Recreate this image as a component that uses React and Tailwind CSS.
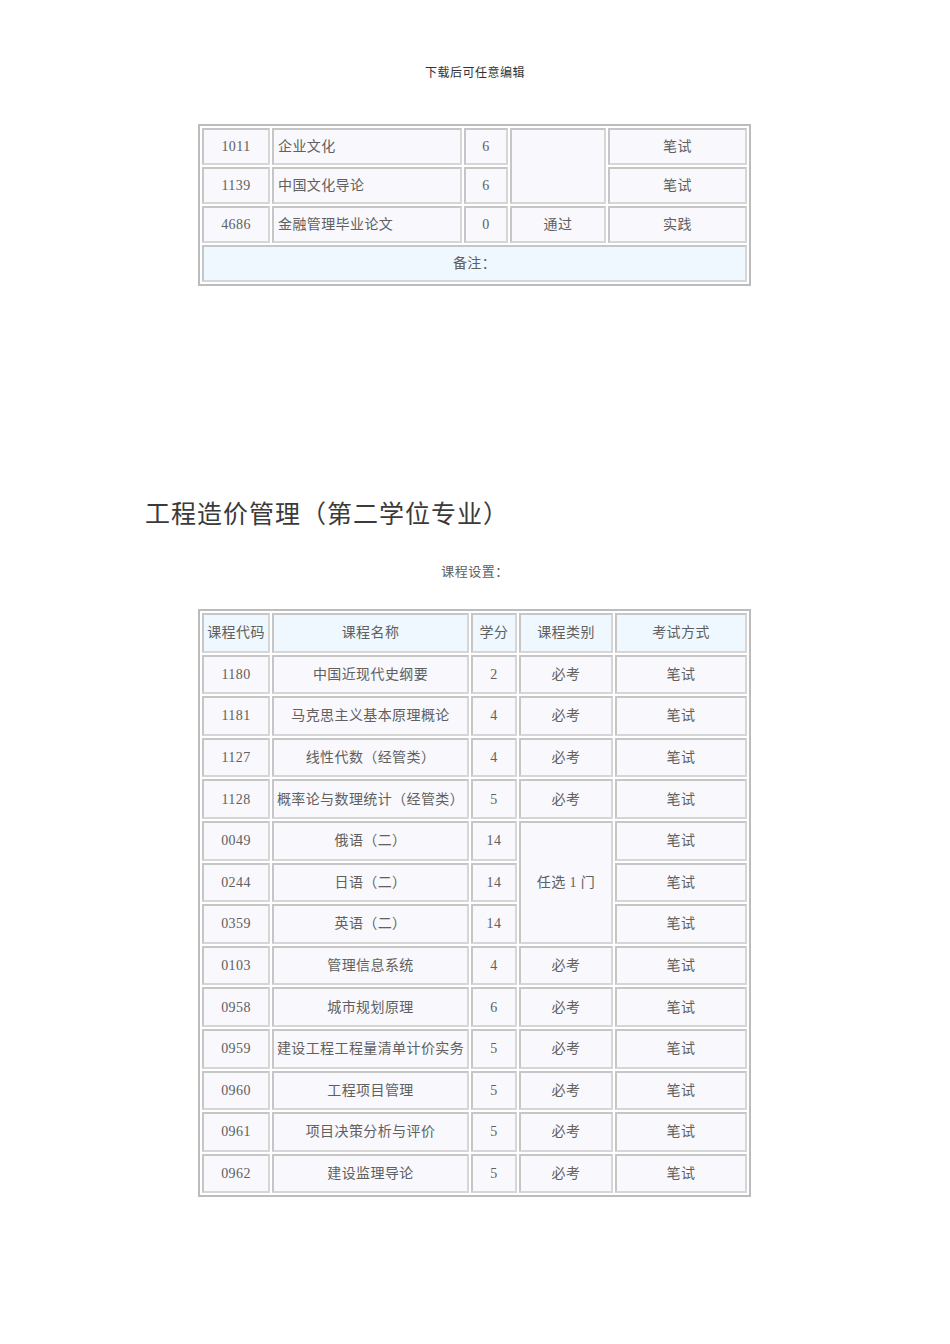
import React from 'react';

const font = { fontFamily: '"Liberation Serif", "Noto Sans CJK SC", serif' };

const first = [
  { code: '1011', name: '企业文化', credit: '6', exam: '笔试' },
  { code: '1139', name: '中国文化导论', credit: '6', exam: '笔试' },
  { code: '4686', name: '金融管理毕业论文', credit: '0', type: '通过', exam: '实践' },
];

const second = [
  ['1180', '中国近现代史纲要', '2', '必考'],
  ['1181', '马克思主义基本原理概论', '4', '必考'],
  ['1127', '线性代数（经管类）', '4', '必考'],
  ['1128', '概率论与数理统计（经管类）', '5', '必考'],
  ['0049', '俄语（二）', '14', 'span'],
  ['0244', '日语（二）', '14', null],
  ['0359', '英语（二）', '14', null],
  ['0103', '管理信息系统', '4', '必考'],
  ['0958', '城市规划原理', '6', '必考'],
  ['0959', '建设工程工程量清单计价实务', '5', '必考'],
  ['0960', '工程项目管理', '5', '必考'],
  ['0961', '项目决策分析与评价', '5', '必考'],
  ['0962', '建设监理导论', '5', '必考'],
];

const cell = 'border-2 border-t-[#c6c6c6] border-l-[#c6c6c6] border-r-[#d6d6d6] border-b-[#d6d6d6] bg-[#f8f8fd] p-0 text-center align-middle';
const head = cell + ' !bg-[#eef8fe] font-normal';

const Index = () => {
  return (
    <div className="min-h-[1344px] w-[950px] bg-white pt-[65px] text-[#606060]" style={font}>
      <div className="text-center text-[12px] leading-[16px] tracking-[0.5px] text-[#333333]">下载后可任意编辑</div>

      <table className="ml-[198px] mt-[43px] w-[553px] table-fixed border-separate border-spacing-[2px] border-2 border-[#bcbcbc] bg-white text-[14px] tracking-[0.4px]">
        <colgroup>
          <col className="w-[68px]" />
          <col className="w-[190px]" />
          <col className="w-[44px]" />
          <col className="w-[96px]" />
          <col className="w-[139px]" />
        </colgroup>
        <tbody>
          {first.map((row, key) => (
            <tr key={key} className="h-[37px]">
              <td className={cell}>{row.code}</td>
              <td className={cell + ' !text-left pl-[4px]'}>{row.name}</td>
              <td className={cell}>{row.credit}</td>
              {key === 0 && <td className={cell} rowSpan={2}></td>}
              {key === 2 && <td className={cell}>{row.type}</td>}
              <td className={cell}>{row.exam}</td>
            </tr>
          ))}
          <tr className="h-[37px]">
            <td className={cell + ' !bg-[#eef8fe]'} colSpan={5}>备注：</td>
          </tr>
        </tbody>
      </table>

      <h1
        className="mt-[211px] pl-[145px] text-[25px] font-normal leading-[30px] tracking-[1px] text-[#3a3a3a]"
        style={{ fontFamily: '"Noto Sans CJK SC", "Noto Sans", sans-serif' }}
      >
        工程造价管理（第二学位专业）
      </h1>

      <div className="mt-[37px] text-center text-[13px] leading-[16px] tracking-[0.5px]">课程设置：</div>

      <table className="ml-[198px] mt-[29px] w-[553px] table-fixed border-separate border-spacing-[2px] border-2 border-[#bcbcbc] bg-white text-[14px] tracking-[0.4px]">
        <colgroup>
          <col className="w-[68px]" />
          <col className="w-[197px]" />
          <col className="w-[46px]" />
          <col className="w-[94px]" />
          <col className="w-[132px]" />
        </colgroup>
        <thead>
          <tr className="h-[39.6px]">
            <th className={head}>课程代码</th>
            <th className={head}>课程名称</th>
            <th className={head}>学分</th>
            <th className={head}>课程类别</th>
            <th className={head}>考试方式</th>
          </tr>
        </thead>
        <tbody>
          {second.map((row, key) => (
            <tr key={key} className="h-[39.6px]">
              <td className={cell}>{row[0]}</td>
              <td className={cell}>{row[1]}</td>
              <td className={cell}>{row[2]}</td>
              {row[3] === 'span' && <td className={cell} rowSpan={3}>任选 1 门</td>}
              {row[3] && row[3] !== 'span' && <td className={cell}>{row[3]}</td>}
              <td className={cell}>笔试</td>
            </tr>
          ))}
        </tbody>
      </table>
    </div>
  );
};

export default Index;
